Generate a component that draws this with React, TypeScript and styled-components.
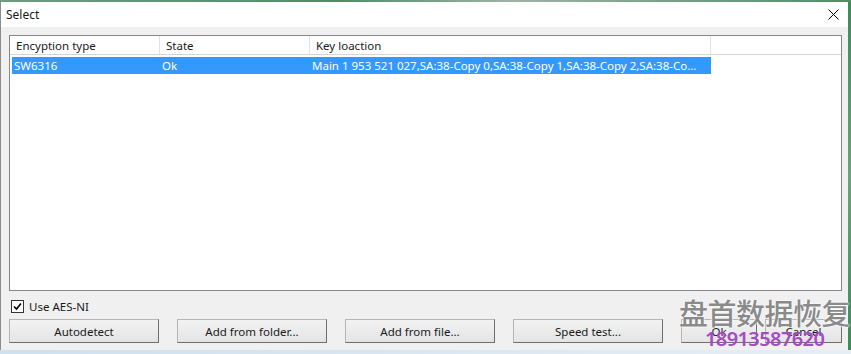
import React from 'react';
import styled, { createGlobalStyle } from 'styled-components';

const GlobalStyle = createGlobalStyle`
  html, body {
    margin: 0;
    padding: 0;
    width: 851px;
    height: 354px;
    overflow: hidden;
    background: #dfe9f2;
  }
  * {
    box-sizing: border-box;
  }
`;

const Screen = styled.div`
  position: relative;
  width: 851px;
  height: 354px;
  display: flex;
  flex-direction: column;
  font-family: "Noto Sans", "Open Sans", Arial, sans-serif;
  font-size: 11.5px;
  color: #1a1a1a;
  overflow: hidden;
`;

const TopStrip = styled.div`
  height: 2px;
  background: linear-gradient(90deg, #6f9b80 0%, #4c8f66 40%, #9fb1a7 60%, #4c8f66 100%);
`;

const Middle = styled.div`
  display: flex;
  flex: 1;
`;

const Dialog = styled.div`
  width: 848px;
  display: flex;
  flex-direction: column;
  border-left: 1px solid #8c8c8c;
`;

const SideStrip = styled.div`
  flex: 1;
  background: linear-gradient(180deg, #3c8a5a 0%, #6aa37f 50%, #3c8a5a 100%);
`;

const TitleBar = styled.div`
  height: 25px;
  background: #fff;
  display: flex;
  align-items: center;
  justify-content: space-between;
  padding: 0 8px 0 5px;
  font-size: 12px;
`;

const CloseButton = styled.div`
  width: 14px;
  height: 14px;
  display: flex;
  align-items: center;
  justify-content: center;
`;

const Client = styled.div`
  flex: 1;
  background: #f0f0f0;
  padding: 8px 6px 0 8px;
  display: flex;
  flex-direction: column;
`;

const ListView = styled.div`
  height: 256px;
  background: #fff;
  border: 1px solid #828790;
  display: flex;
  flex-direction: column;
  overflow: hidden;
`;

const HeaderRow = styled.div`
  display: flex;
  height: 19px;
  border-bottom: 1px solid #d5d5d5;
  background: #fff;
`;

const HeaderCell = styled.div<{ $w: number; $last?: boolean }>`
  width: ${p => p.$w}px;
  flex: ${p => (p.$last ? 1 : 'none')};
  padding-left: 6px;
  display: flex;
  align-items: center;
  border-right: ${p => (p.$last ? 'none' : '1px solid #e2e2e2')};
  white-space: nowrap;
`;

const Row = styled.div<{ $selected?: boolean }>`
  display: flex;
  height: 17px;
  margin-top: 2px;
  margin-left: 2px;
  width: 699px;
  background: ${p => (p.$selected ? '#3399ff' : 'transparent')};
  color: ${p => (p.$selected ? '#fff' : '#000')};
`;

const Cell = styled.div<{ $w: number }>`
  width: ${p => p.$w}px;
  padding-left: 2px;
  display: flex;
  align-items: center;
  white-space: nowrap;
  overflow: hidden;
`;

const CheckRow = styled.label`
  display: flex;
  align-items: center;
  gap: 5px;
  margin-top: 9px;
  margin-left: 2px;
  height: 13px;
`;

const CheckBox = styled.span`
  width: 13px;
  height: 13px;
  border: 1px solid #333;
  background: #fff;
  display: flex;
  align-items: center;
  justify-content: center;
`;

const ButtonRow = styled.div`
  display: flex;
  margin-top: 6px;
  gap: 18px;
`;

const Button = styled.button<{ $w: number }>`
  width: ${p => p.$w}px;
  height: 24px;
  padding: 0;
  font-family: inherit;
  font-size: 11.5px;
  color: #1a1a1a;
  background: linear-gradient(180deg, #f2f2f2 0%, #e4e4e4 100%);
  border: 1px solid #b5b5b5;
  border-right-color: #6e6e6e;
  border-bottom-color: #6e6e6e;
`;

const SmallPair = styled.div`
  display: flex;
  gap: 8px;
`;

const BottomStrip = styled.div`
  height: 4px;
  background: linear-gradient(90deg, #cfe0ee, #e6eef5);
`;

const Watermark = styled.div`
  position: absolute;
  left: 679px;
  top: 293px;
  width: 172px;
  display: flex;
  flex-direction: column;
  align-items: flex-start;
  pointer-events: none;
`;

const WatermarkTitle = styled.div`
  font-family: "Noto Sans CJK SC", sans-serif;
  font-size: 29px;
  font-weight: 500;
  line-height: 38px;
  white-space: nowrap;
  letter-spacing: -0.5px;
  color: #8a8a8a;
  text-shadow: 0 0 2px #fff, 0 0 2px #fff;
`;

const WatermarkPhone = styled.div`
  font-family: "Noto Sans", sans-serif;
  font-size: 20px;
  font-weight: 600;
  line-height: 20px;
  white-space: nowrap;
  color: #a54bc6;
  margin-top: -2px;
  margin-left: 26px;
  letter-spacing: -0.6px;
`;

const columns = [148, 150, 401];

export default function App() {
  return (
    <>
      <GlobalStyle />
      <Screen>
        <TopStrip />
        <Middle>
          <Dialog>
            <TitleBar>
              <span>Select</span>
              <CloseButton>
                <svg width="11" height="11" viewBox="0 0 11 11">
                  <path d="M0.5 0.5 L10.5 10.5 M10.5 0.5 L0.5 10.5" stroke="#000" strokeWidth="1" />
                </svg>
              </CloseButton>
            </TitleBar>
            <Client>
              <ListView>
                <HeaderRow>
                  <HeaderCell $w={150}>Encyption type</HeaderCell>
                  <HeaderCell $w={150}>State</HeaderCell>
                  <HeaderCell $w={401}>Key loaction</HeaderCell>
                  <HeaderCell $w={130} $last />
                </HeaderRow>
                <Row $selected>
                  <Cell $w={columns[0]}>SW6316</Cell>
                  <Cell $w={columns[1]}>Ok</Cell>
                  <Cell $w={columns[2]}>
                    Main 1 953 521 027,SA:38-Copy 0,SA:38-Copy 1,SA:38-Copy 2,SA:38-Co...
                  </Cell>
                </Row>
              </ListView>
              <CheckRow>
                <CheckBox>
                  <svg width="9" height="9" viewBox="0 0 9 9">
                    <path d="M1 4.5 L3.5 7 L8 1.5" stroke="#000" strokeWidth="1.6" fill="none" />
                  </svg>
                </CheckBox>
                <span>Use AES-NI</span>
              </CheckRow>
              <ButtonRow>
                <Button $w={150}>Autodetect</Button>
                <Button $w={150}>Add from folder...</Button>
                <Button $w={150}>Add from file...</Button>
                <Button $w={150}>Speed test...</Button>
                <SmallPair>
                  <Button $w={76}>Ok</Button>
                  <Button $w={77}>Cancel</Button>
                </SmallPair>
              </ButtonRow>
            </Client>
          </Dialog>
          <SideStrip />
        </Middle>
        <BottomStrip />
        <Watermark>
          <WatermarkTitle>盘首数据恢复</WatermarkTitle>
          <WatermarkPhone>18913587620</WatermarkPhone>
        </Watermark>
      </Screen>
    </>
  );
}
